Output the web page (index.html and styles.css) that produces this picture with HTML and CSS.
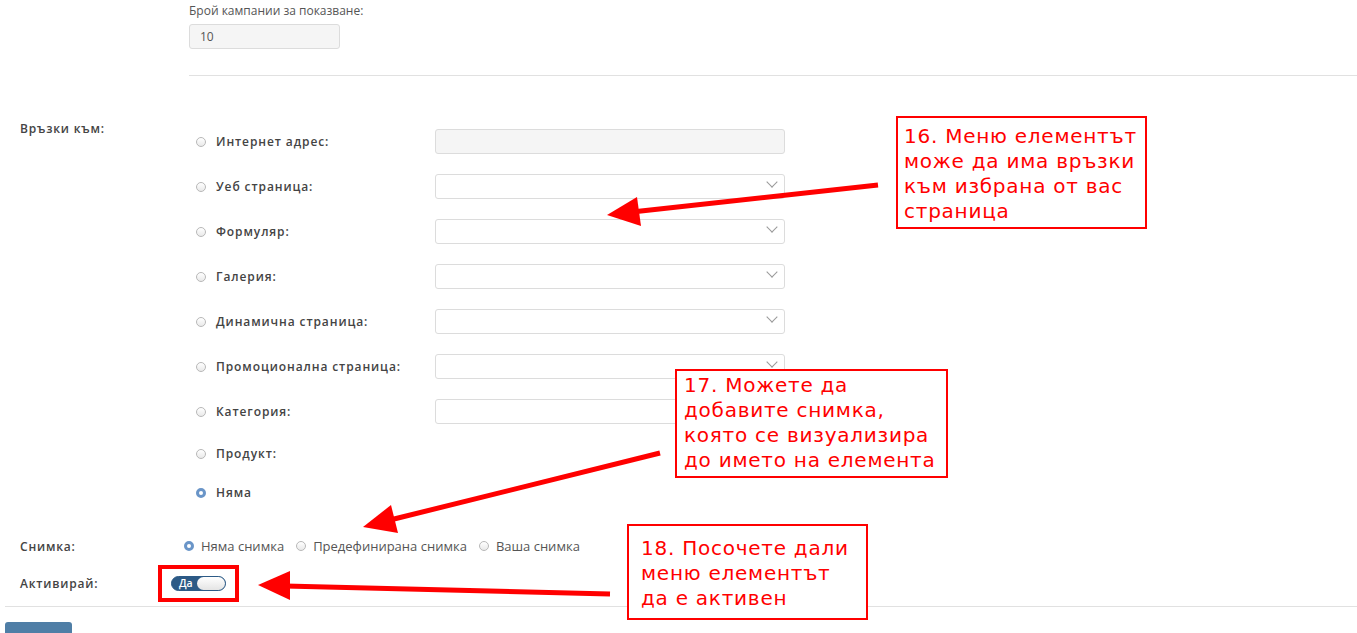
FILE: index.html
```html
<html lang="bg">
<head>
  <meta charset="UTF-8">
  <meta name="viewport" content="width=device-width, initial-scale=1.0">
  <title>Меню елемент</title>
  <link rel="stylesheet" href="styles.css">
</head>
<body>
  <div class="page">
    <div class="field-top">
      <label class="small-label" for="count">Брой кампании за показване:</label>
      <input class="text-input short" id="count" type="text" value="10" readonly>
    </div>

    <hr class="sep sep-inner">

    <div class="field field-links">
      <label class="field-label">Връзки към:</label>
      <div class="link-list">
        <div class="link-row">
          <input type="radio" name="link">
          <span class="link-name">Интернет адрес:</span>
          <input class="text-input wide" type="text" disabled>
        </div>
        <div class="link-row">
          <input type="radio" name="link">
          <span class="link-name">Уеб страница:</span>
          <span class="select-wrap"><select class="text-input wide"></select></span>
        </div>
        <div class="link-row">
          <input type="radio" name="link">
          <span class="link-name">Формуляр:</span>
          <span class="select-wrap"><select class="text-input wide"></select></span>
        </div>
        <div class="link-row">
          <input type="radio" name="link">
          <span class="link-name">Галерия:</span>
          <span class="select-wrap"><select class="text-input wide"></select></span>
        </div>
        <div class="link-row">
          <input type="radio" name="link">
          <span class="link-name">Динамична страница:</span>
          <span class="select-wrap"><select class="text-input wide"></select></span>
        </div>
        <div class="link-row">
          <input type="radio" name="link">
          <span class="link-name">Промоционална страница:</span>
          <span class="select-wrap"><select class="text-input wide"></select></span>
        </div>
        <div class="link-row">
          <input type="radio" name="link">
          <span class="link-name">Категория:</span>
          <span class="select-wrap"><select class="text-input wide"></select></span>
        </div>
        <div class="link-row plain">
          <input type="radio" name="link">
          <span class="link-name">Продукт:</span>
        </div>
        <div class="link-row plain last">
          <input type="radio" name="link" checked>
          <span class="link-name">Няма</span>
        </div>
      </div>
    </div>

    <div class="field field-photo">
      <label class="field-label">Снимка:</label>
      <div class="photo-options">
        <label class="option"><input type="radio" name="photo" checked> Няма снимка</label>
        <label class="option"><input type="radio" name="photo"> Предефинирана снимка</label>
        <label class="option"><input type="radio" name="photo"> Ваша снимка</label>
      </div>
    </div>

    <div class="field field-active">
      <label class="field-label">Активирай:</label>
      <span class="mark-box">
        <span class="switch"><span class="switch-text">Да</span><span class="knob"></span></span>
      </span>
    </div>

    <hr class="sep sep-bottom">

    <button class="save-btn" type="button">Запиши</button>

    <!-- annotations -->
    <svg class="arrows" width="1357" height="633" viewBox="0 0 1357 633">
      <line x1="878" y1="185" x2="632" y2="212" stroke="#f00" stroke-width="5"/>
      <polygon points="607,215 637,197 641,226" fill="#f00"/>
      <line x1="660" y1="453" x2="390" y2="520" stroke="#f00" stroke-width="5"/>
      <polygon points="363,527 391,505 398,533" fill="#f00"/>
      <line x1="610" y1="594" x2="285" y2="586" stroke="#f00" stroke-width="5"/>
      <polygon points="258,585 290,571 290,600" fill="#f00"/>
    </svg>

    <div class="note note-16">16. Меню елементът<br>може да има връзки<br>към избрана от вас<br>страница</div>
    <div class="note note-17">17. Можете да<br>добавите снимка,<br>която се визуализира<br>до името на елемента</div>
    <div class="note note-18">18. Посочете дали<br>меню елементът<br>да е активен</div>
  </div>
</body>
</html>
```

FILE: styles.css
```css
body {
  margin: 0;
  font-family: "Open Sans", "Liberation Sans", sans-serif;
  font-size: 12px;
  color: #555;
  background: #fff;
  overflow: hidden;
}

.page {
  position: relative;
  width: 1357px;
  height: 633px;
}

/* top field */
.field-top {
  padding: 2px 0 0 189px;
}

.small-label {
  display: block;
  line-height: 17px;
  color: #555;
}

.text-input {
  box-sizing: border-box;
  height: 25px;
  border: 1px solid #dcdcdc;
  border-radius: 3px;
  background: #fff;
  font-family: inherit;
  font-size: 12px;
  color: #555;
  padding: 0 10px;
  margin: 0;
  outline: none;
}

.text-input.short {
  display: block;
  width: 151px;
  margin-top: 5px;
  background: #f5f5f5;
}

.text-input[disabled] {
  background: #f5f5f5;
}

.text-input.wide {
  width: 350px;
}

select.text-input {
  appearance: none;
  -webkit-appearance: none;
  display: block;
}

.sep {
  border: none;
  border-top: 1px solid #e1e1e1;
  height: 0;
  margin: 0;
}

.sep-inner {
  margin: 26px 0 0 189px;
}

/* rows with a label column */
.field {
  display: flex;
  padding-left: 20px;
}

.field-label {
  font-weight: 600;
  color: #444;
  letter-spacing: 0.8px;
  line-height: 17px;
}

.field-links {
  margin-top: 44px;
}

.field-links .field-label {
  width: 175px;
  flex-shrink: 0;
}

.link-list {
  padding-top: 9px;
}

.link-row {
  display: flex;
  align-items: center;
  height: 25px;
  margin-bottom: 20px;
}

.link-row.plain {
  height: 19px;
}

.link-row.last {
  margin-bottom: 0;
}

.link-name {
  width: 219px;
  font-weight: 600;
  color: #444;
  letter-spacing: 0.9px;
}

input[type="radio"] {
  appearance: none;
  -webkit-appearance: none;
  box-sizing: border-box;
  width: 10px;
  height: 10px;
  margin: 0 10px 0 1px;
  border: 1px solid #b8b8b8;
  border-radius: 50%;
  background: linear-gradient(#fff, #e9e9e9);
  flex-shrink: 0;
}

input[type="radio"]:checked {
  border: 3px solid #6a95c8;
  background: #fff;
}

.select-wrap {
  position: relative;
  display: block;
}

.select-wrap::after {
  content: "";
  position: absolute;
  right: 9px;
  top: 4px;
  width: 7px;
  height: 7px;
  border-right: 1px solid #999;
  border-bottom: 1px solid #999;
  transform: rotate(45deg);
}

/* photo */
.field-photo {
  margin-top: 35px;
  align-items: center;
}

.field-photo .field-label {
  width: 164px;
  flex-shrink: 0;
}

.photo-options {
  display: flex;
  align-items: center;
  font-size: 13px;
  color: #555;
}

.option {
  display: flex;
  align-items: center;
  margin-right: 12px;
  white-space: nowrap;
}

.option input[type="radio"] {
  margin: 0 7px 0 0;
}

/* active */
.field-active {
  margin-top: 10px;
  align-items: center;
}

.field-active .field-label {
  width: 138px;
  flex-shrink: 0;
}

.mark-box {
  display: inline-flex;
  border: 4px solid #f00;
  padding: 7px 9px;
}

.switch {
  box-sizing: border-box;
  display: flex;
  align-items: center;
  width: 55px;
  height: 15px;
  border-radius: 8px;
  background: #2c5a86;
  border: 1px solid #2c5a86;
}

.switch-text {
  color: #fff;
  font-size: 10.5px;
  font-weight: 600;
  padding-left: 7px;
  line-height: 13px;
}

.knob {
  margin-left: auto;
  width: 28px;
  height: 13px;
  border-radius: 7px;
  background: linear-gradient(#fff, #e4e4e4);
}

.sep-bottom {
  margin: 4px 0 0 5px;
}

.save-btn {
  display: block;
  margin: 15px 0 0 5px;
  width: 67px;
  height: 30px;
  border: none;
  border-radius: 3px;
  background: #4f7ea6;
  color: #fff;
  font-family: inherit;
  font-size: 12px;
  font-weight: 600;
}

/* annotation layer */
.arrows {
  position: absolute;
  left: 0;
  top: 0;
  pointer-events: none;
}

.note {
  position: absolute;
  box-sizing: border-box;
  border: 2px solid #f00;
  background: #fff;
  color: #f00;
  font-family: "DejaVu Sans", sans-serif;
  font-size: 20px;
  line-height: 25px;
  letter-spacing: 0.75px;
  white-space: nowrap;
}

.note-16 {
  left: 896px;
  top: 116px;
  width: 251px;
  padding: 6px 6px 3px;
}

.note-17 {
  left: 675px;
  top: 369px;
  width: 273px;
  padding: 2px 7px 3px;
}

.note-18 {
  left: 627px;
  top: 524px;
  width: 241px;
  padding: 10px 12px 7px;
}
```
